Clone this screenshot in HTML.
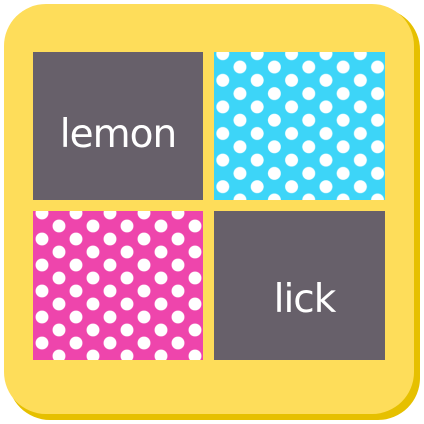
<!DOCTYPE html>
<html><head><style>
body{margin:0;width:424px;height:424px;background:#fff;position:relative;overflow:hidden}
.sh{position:absolute;left:8px;top:8px;width:412px;height:412px;border-radius:42px;background:#E6C000}
.bx{position:absolute;left:4px;top:4px;width:410px;height:410px;border-radius:42px;background:#FEDD5A}
.p{position:absolute}
.g{background:#67606A;color:#fff;font-family:"DejaVu Sans","Liberation Sans",sans-serif;font-weight:normal;display:flex;align-items:center;justify-content:center}
.b{background-color:#3DD5F8;background-image:radial-gradient(circle at 8.6px 6.65px,#fff 6.1px,transparent 6.8px),radial-gradient(circle at 25.8px 19.95px,#fff 6.1px,transparent 6.8px);background-size:34.4px 26.6px;background-position:0.2px -4.95px}
.k{background-color:#EE45AC;background-image:radial-gradient(circle at 8.5px 6.5px,#fff 6.1px,transparent 6.8px),radial-gradient(circle at 25.5px 19.5px,#fff 6.1px,transparent 6.8px);background-size:34px 26px;background-position:0.5px -4.5px}
</style></head><body>
<div class="sh"></div><div class="bx"></div>
<div class="p g" style="left:33px;top:52px;width:170px;height:148px;font-size:39px;letter-spacing:-1px"><span style="margin-top:16px">lemon</span></div>
<div class="p b" style="left:214px;top:52px;width:171px;height:148px"></div>
<div class="p k" style="left:33px;top:211px;width:170px;height:149px"></div>
<div class="p g" style="left:214px;top:211px;width:171px;height:149px;font-size:39px;letter-spacing:-1px"><span style="margin-top:28px;margin-left:10px">lick</span></div>
</body></html>
